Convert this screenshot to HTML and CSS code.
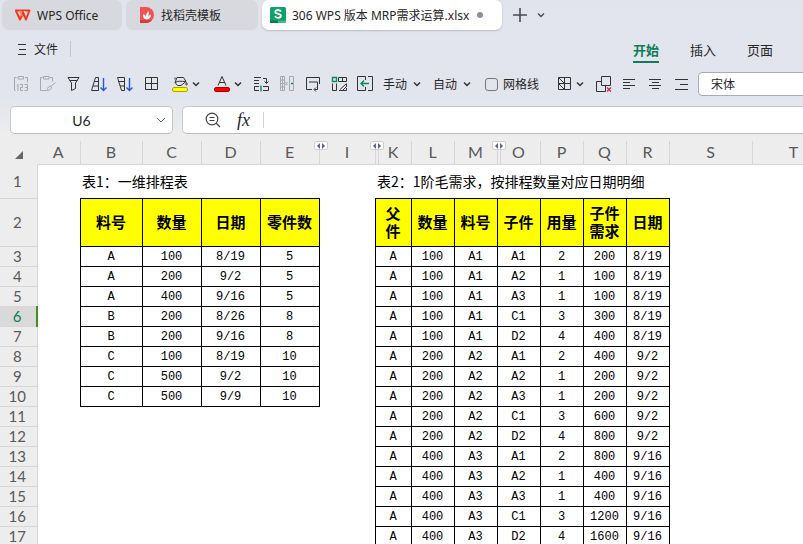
FILE: index.html
```html
<!DOCTYPE html>
<html lang="zh-CN">
<head>
    <meta charset="UTF-8">
    <meta name="viewport" content="width=device-width, initial-scale=1.0">
    <title>306 WPS 版本 MRP需求运算.xlsx</title>
    <link rel="stylesheet" href="styles.css">
</head>
<body>
    <header class="chrome">
        <nav class="doc-tabs">
            <button class="doc-tab tab-home">
                <svg class="tab-icon" width="16" height="16" viewBox="0 0 16 16">
                    <path d="M.8 3.5h13.6l-3.4 9-3-7-3 7z" fill="none" stroke="#f5371f" stroke-width="2" stroke-linejoin="round"/>
                    <path d="M4.500 3.500l3.500 7" stroke="#ff7a4a" stroke-width="1.4"/>
                    <path d="M9.500 3.800l1.600 4" stroke="#e2e2e6" stroke-width="1"/>
                </svg>
                WPS Office
            </button>
            <button class="doc-tab tab-store">
                <svg class="tab-icon" width="16" height="16" viewBox="0 0 16 16">
                    <path d="M1 0h6a8 8 0 0 1 0 16H1z" fill="#f15355"/>
                    <path d="M1 13h12a8 8 0 0 1-6 3H1z" fill="#d83a3e"/>
                    <path d="M7.500 12.500c-3-.5-4-3-3-5.500 1.500.8 2.500 2 2.500 3.500 0-2.500.5-4.500 2.500-6.500.6 2.300.2 4-.8 6 .8-1.300 1.800-2 3.300-2.200 0 2.600-1.500 4.500-4.500 4.700z" fill="#fff"/>
                </svg>
                找稻壳模板
            </button>
            <button class="doc-tab tab-file active">
                <svg class="tab-icon" width="16" height="16" viewBox="0 0 16 16">
                    <rect width="16" height="16" rx="1.500" fill="#12a06b"/>
                    <path d="M0 13.500h16V16H0z" fill="#0a7d50"/>
                    <path d="M8 13.500h8V16H8z" fill="#3fc08c"/>
                    <path d="M10.800 4.600C10.300 3.500 9.300 3 8 3 6.400 3 5.300 3.700 5.300 4.900c0 2.700 5.600 1.200 5.600 3.900 0 1.200-1.200 2-2.900 2-1.500 0-2.600-.6-3-1.800" fill="none" stroke="#fff" stroke-width="1.800"/>
                </svg>
                306 WPS 版本 MRP需求运算.xlsx
                <span class="unsaved"></span>
            </button>
            <button class="new-tab" aria-label="新建">
                <svg width="14" height="14" viewBox="0 0 14 14"><path d="M7 0v14M0 7h14" stroke="#4a4a4c" stroke-width="1.600"/></svg>
            </button>
            <button class="new-tab" aria-label="更多">
                <svg width="8" height="8" viewBox="0 0 8 8"><path d="M1 2.500l3 3 3-3" fill="none" stroke="#4a4a4c" stroke-width="1.400"/></svg>
            </button>
        </nav>

        <div class="menu-bar">
            <button class="file-menu">
                <svg width="9" height="12" viewBox="0 0 9 12"><path d="M0 1.500h8M1 6.500h7M0 11.500h8" stroke="#333" stroke-width="1"/></svg>
                文件
            </button>
            <nav class="ribbon-tabs">
                <button class="ribbon-tab current">开始</button>
                <button class="ribbon-tab">插入</button>
                <button class="ribbon-tab">页面</button>
            </nav>
        </div>

        <div class="toolbar">
            <button class="tool disabled" aria-label="粘贴值">
                <svg viewBox="0 0 18 18">
                    <path d="M4.500 2.500h-2v13h1M13 2.500h2.500v5M6 1.500h5.500v2.500H6z"/>
                    <path d="M5 10.500l1-1v6.500M8 9.500h2.500v3H8.500v3H11M12.500 9.500H15.500v6h-3M13 12.500h2.500"/>
                </svg>
            </button>
            <button class="tool disabled" aria-label="选择性粘贴">
                <svg viewBox="0 0 18 18">
                    <path d="M4.500 2.500h-2v13H8M12 2.500h2.500v4M5.500 1.500H11V4H5.500z"/>
                    <path d="M17.500 7.500l-5 4M12 11c1 .5 1.500 1 1.500 2-1 2-3 2.500-5 2.500 1.200-1 .8-3.500 3.500-4.500z"/>
                </svg>
            </button>
            <button class="tool" aria-label="筛选">
                <svg viewBox="0 0 18 18"><path d="M4 2.500h11L11.500 8v5.500l-4 2V8zM5.500 5.500h8"/></svg>
            </button>
            <button class="tool" aria-label="升序">
                <svg viewBox="0 0 18 18">
                    <path d="M5.500 2.500h3v13h-7zM4.500 6.500h4M3 11h5.500"/>
                    <path class="blue" d="M13.500 3v12.500M10.500 12.500l3 3 3-3"/>
                </svg>
            </button>
            <button class="tool" aria-label="降序">
                <svg viewBox="0 0 18 18">
                    <path d="M1.500 2.500h7v13h-3zM2.500 6.500h6M4 11h4.500"/>
                    <path class="blue" d="M13.500 3v12.500M10.500 12.500l3 3 3-3"/>
                </svg>
            </button>
            <button class="tool" aria-label="边框">
                <svg viewBox="0 0 18 18"><path d="M3.500 2.500h12v12h-12zM9.500 2.500v12M3.500 8.500h12"/></svg>
            </button>
            <button class="tool drop" aria-label="填充颜色">
                <svg viewBox="0 0 18 18">
                    <path d="M6 2.500h6.500l2.500 4-5 4H6.500L4 7.500zM4 7.500c3-2 6-1 11-1M4 4.500V2.500"/>
                    <path d="M15.500 7.500c1 1.500 1 2.500 0 2.500s-1-1 0-2.500z"/>
                    <rect class="fill-yellow" x="1.500" y="12.500" width="15" height="4" rx="1.500"/>
                </svg>
                <svg class="caret" viewBox="0 0 8 8"><path d="M1 2.500l3 3 3-3"/></svg>
            </button>
            <button class="tool drop" aria-label="字体颜色">
                <svg viewBox="0 0 18 18">
                    <path d="M5 10.500l4-9 4 9M6.200 7.500h5.600"/>
                    <rect class="fill-red" x="1.500" y="12.500" width="15" height="4" rx="1.500"/>
                </svg>
                <svg class="caret" viewBox="0 0 8 8"><path d="M1 2.500l3 3 3-3"/></svg>
            </button>
            <button class="tool" aria-label="转置">
                <svg viewBox="0 0 18 18">
                    <path d="M2 2.500h7M2 5.500h5M2 8.500h5M11 3.500h3.500V8M12.500 6.500l2 2 2-2M7 11.500H2.500v4H7M11 11.500h5.500v4H11"/>
                    <path class="green" d="M9 10.500v6"/>
                </svg>
            </button>
            <button class="tool disabled" aria-label="分列">
                <svg viewBox="0 0 18 18">
                    <path d="M2.500 1.500h4v14h-4zM2.500 5h4M2.500 8.500h4M2.500 12h4M4.500 1.500v14M11.500 1.500h4v14h-4zM7.500 7l2 3M9.500 7l-2 3"/>
                    <path class="green" d="M13 8.500h2"/>
                </svg>
            </button>
            <button class="tool" aria-label="自动换行">
                <svg viewBox="0 0 18 18"><path d="M8 14.500H2.500v-12h13V9M5 7h8.500v7.500h-3M12 12.500l-2 2 2 2"/></svg>
            </button>
            <button class="tool" aria-label="数据透视表">
                <svg viewBox="0 0 18 18">
                    <path d="M8.500 2.500h8v4h-8zM12.500 2.500v4M2.500 8.500v7h4v-7M9 15.500h7.500V13M10 14.500l6-5.500M16.500 8.500V12M12.500 15.500l4-4"/>
                    <path class="green" d="M2.500 2.500h4v4h-4z"/>
                </svg>
            </button>
            <button class="tool" aria-label="合并">
                <svg viewBox="0 0 18 18">
                    <path d="M9.500 5V1.500h-8v14h8V12M12 1.500h4.500v14H12"/>
                    <path class="green" d="M5 8.500h8M8 5.500l-3 3 3 3"/>
                </svg>
            </button>
            <button class="tool drop text-drop">手动
                <svg class="caret" viewBox="0 0 8 8"><path d="M1 2.500l3 3 3-3"/></svg>
            </button>
            <button class="tool drop text-drop">自动
                <svg class="caret" viewBox="0 0 8 8"><path d="M1 2.500l3 3 3-3"/></svg>
            </button>
            <label class="gridlines"><input type="checkbox"> 网格线</label>
            <button class="tool drop" aria-label="斜线表头">
                <svg viewBox="0 0 18 18"><path d="M3.500 2.500h12v12h-12zM9.500 2.500v12M3.500 8.500h12M3.500 2.500l6 6M3.500 8.500l6 6"/></svg>
                <svg class="caret" viewBox="0 0 8 8"><path d="M1 2.500l3 3 3-3"/></svg>
            </button>
            <button class="tool" aria-label="删除对象">
                <svg viewBox="0 0 18 18">
                    <path d="M7.500 1.500h9v9h-9zM7.500 6.500h-5v10h9v-6"/>
                    <path class="red" d="M13 12.500l4 4M17 12.500l-4 4"/>
                </svg>
            </button>
            <button class="tool" aria-label="左对齐">
                <svg viewBox="0 0 18 18"><path d="M3 4.500h12M3 7.500h7M3 10.500h12M3 13.500h7"/></svg>
            </button>
            <button class="tool" aria-label="居中">
                <svg viewBox="0 0 18 18"><path d="M3 4.500h12M6 7.500h7M3 10.500h12M6 13.500h7"/></svg>
            </button>
            <button class="tool" aria-label="右对齐">
                <svg viewBox="0 0 18 18"><path d="M3 4.500h13M8 9.500h8M3 14.500h13"/></svg>
            </button>
            <select class="font-select" aria-label="字体">
                <option>宋体</option>
            </select>
        </div>

        <div class="formula-row">
            <div class="name-box">
                <input type="text" value="U6" aria-label="名称框">
                <button class="name-drop" aria-label="展开">
                    <svg width="10" height="8" viewBox="0 0 10 8"><path d="M1 2l4 4 4-4" fill="none" stroke="#666"/></svg>
                </button>
            </div>
            <div class="formula-bar">
                <button class="formula-btn" aria-label="浏览公式结果">
                    <svg width="16" height="16" viewBox="0 0 16 16"><path d="M11 11l4 4M4.500 5.500h5M4.500 8.500h5" stroke="#444" stroke-width="1.200"/><circle cx="7" cy="7" r="5.800" fill="none" stroke="#444" stroke-width="1.200"/></svg>
                </button>
                <button class="formula-btn fx">fx</button>
                <input type="text" class="formula-input" aria-label="编辑栏">
            </div>
        </div>
    </header>

    <main class="sheet">
        <table class="grid">
            <colgroup>
                <col class="w-head"><col class="w-a"><col class="w-b"><col class="w-c"><col class="w-c"><col class="w-c">
                <col class="w-i"><col class="w-k"><col class="w-l"><col class="w-l"><col class="w-l"><col class="w-l">
                <col class="w-l"><col class="w-l"><col class="w-s"><col class="w-s"><col>
            </colgroup>
            <thead>
                <tr>
                    <th class="corner"><svg width="8" height="8" viewBox="0 0 8 8"><path d="M8 0v8H0z" fill="#666"/></svg></th>
                    <th>A</th><th>B</th><th>C</th><th>D</th>
                    <th class="folded">E<span class="fold"></span></th>
                    <th class="folded">I<span class="fold"></span></th>
                    <th>K</th><th>L</th>
                    <th class="folded">M<span class="fold"></span></th>
                    <th>O</th><th>P</th><th>Q</th><th>R</th><th>S</th><th>T</th><th></th>
                </tr>
            </thead>
            <tbody id="rows">
                <tr class="title-row">
                    <th>1</th>
                    <td></td>
                    <td colspan="4">表1：一维排程表</td>
                    <td></td>
                    <td colspan="7">表2：1阶毛需求，按排程数量对应日期明细</td>
                </tr>
                <tr class="head-row">
                    <th>2</th>
                    <td></td>
                    <td class="box">料号</td><td class="box">数量</td><td class="box">日期</td><td class="box">零件数</td>
                    <td></td>
                    <td class="box">父<br>件</td><td class="box">数量</td><td class="box">料号</td><td class="box">子件</td>
                    <td class="box">用量</td><td class="box">子件<br>需求</td><td class="box">日期</td>
                </tr>
            </tbody>
        </table>
    </main>

    <script src="script.js"></script>
</body>
</html>
```
FILE: styles.css
```css
* {
    box-sizing: border-box;
}

body {
    margin: 0;
    height: 100vh;
    display: flex;
    flex-direction: column;
    overflow: hidden;
    font-family: "Noto Sans", "Noto Sans CJK SC", sans-serif;
    font-size: 12px;
    color: #262626;
    background-color: #fff;
}

button,
input,
select {
    font: inherit;
    color: inherit;
    border: none;
    background: none;
    padding: 0;
    margin: 0;
}

input:focus {
    outline: none;
}

.chrome {
    flex: none;
    background: linear-gradient(#e1e4ed 0, #e2e5ed 98px, #ededed 138px);
}

/* document tabs */
.doc-tabs {
    display: flex;
    height: 30px;
    padding-left: 2px;
    gap: 4px;
}

.doc-tab {
    display: flex;
    align-items: center;
    gap: 6px;
    padding: 0 13px;
    border-radius: 7px;
    background-color: #d8d9de;
    white-space: nowrap;
}

.tab-home {
    width: 120px;
}

.tab-store {
    width: 132px;
}

.tab-file {
    width: 240px;
    padding: 0 8px;
}

.doc-tab.active {
    background-color: #fff;
    box-shadow: 0 1px 2px #b9bdc6;
}

.tab-icon {
    flex: none;
}

.unsaved {
    width: 6px;
    height: 6px;
    margin-left: 2px;
    border-radius: 50%;
    background-color: #8f8f8f;
}

.new-tab {
    display: flex;
    align-items: center;
    padding: 0 3px;
}

.new-tab:nth-of-type(4) {
    padding-left: 7px;
}

/* menu */
.menu-bar {
    display: flex;
    justify-content: space-between;
    height: 38px;
    padding: 0 30px 0 18px;
}

.file-menu {
    display: flex;
    align-items: center;
    gap: 7px;
    height: 16px;
    margin-top: 11px;
    padding-right: 12px;
    border-right: 1px solid #c3c5cb;
}

.ribbon-tabs {
    display: flex;
    gap: 31px;
}

.ribbon-tab {
    height: 24px;
    margin-top: 9px;
    padding-bottom: 2px;
    font-size: 13px;
    border-bottom: 2px solid transparent;
}

.ribbon-tab.current {
    color: #0b7d57;
    font-weight: bold;
    border-color: #0b7d57;
}

/* toolbar */
.toolbar {
    display: flex;
    align-items: center;
    gap: 8px;
    height: 32px;
    padding-left: 12px;
    white-space: nowrap;
}

.tool {
    flex: none;
    display: flex;
    align-items: center;
    gap: 3px;
}

.tool svg {
    width: 18px;
    height: 18px;
    fill: none;
    stroke: #333;
}

.tool.disabled svg {
    stroke: #a7a8ad;
}

.tool .caret {
    width: 8px;
    height: 8px;
    stroke-width: 1.5;
}

.drop {
    padding: 0 2px 0 3px;
}

.text-drop {
    gap: 6px;
    padding: 0 3px 0 1px;
}

.tool .blue {
    stroke: #2457e6;
    stroke-width: 1.4;
}

.tool .green {
    stroke: #0b8a5c;
    stroke-width: 1.4;
}

.tool .red {
    stroke: #c8284e;
    stroke-width: 1.3;
}

.fill-yellow {
    fill: #ff0;
    stroke: #a8a800;
}

.fill-red {
    fill: #f00;
    stroke: #b50000;
}

.gridlines {
    flex: none;
    display: flex;
    align-items: center;
    gap: 5px;
    padding: 0 5px 0 3px;
}

.gridlines input {
    appearance: none;
    width: 13px;
    height: 13px;
    border: 1px solid #777;
    border-radius: 3px;
}

.font-select {
    appearance: none;
    flex: 1 0 120px;
    height: 24px;
    padding-left: 12px;
    border: 1px solid #a9abb3;
    border-radius: 4px;
    background-color: #fff;
}

/* name box and formula bar */
.formula-row {
    display: flex;
    gap: 9px;
    height: 41px;
    padding: 6px 0 7px 10px;
}

.name-box,
.formula-bar {
    display: flex;
    align-items: center;
    background-color: #fff;
    border: 1px solid #c6c9cf;
    border-bottom-color: #b9bbbe;
    border-radius: 5px;
}

.name-box {
    flex: none;
    width: 163px;
    padding-right: 6px;
}

.name-box input {
    flex: 1;
    min-width: 0;
    padding-right: 4px;
    text-align: center;
    font-family: Lato, sans-serif;
    font-size: 14px;
}

.name-drop {
    display: flex;
}

.formula-bar {
    flex: 1;
    gap: 16px;
    padding-left: 22px;
    border-right: none;
    border-radius: 5px 0 0 5px;
}

.formula-btn {
    display: flex;
}

.fx {
    font-family: "Liberation Serif", serif;
    font-style: italic;
    font-size: 18px;
    line-height: 20px;
}

.formula-input {
    flex: 1;
    height: 16px;
    margin-left: -3px;
    border-left: 1px solid #d2d2d2;
}

/* sheet */
.sheet {
    flex: 1;
    overflow: hidden;
}

.grid {
    width: 100%;
    table-layout: fixed;
    border-collapse: collapse;
}

.w-head {
    width: 37px;
}

.w-a {
    width: 43px;
}

.w-b {
    width: 62px;
}

.w-c {
    width: 59px;
}

.w-i {
    width: 56px;
}

.w-k {
    width: 36px;
}

.w-l {
    width: 43px;
}

.w-s {
    width: 83px;
}

.grid th,
.grid td {
    height: 20px;
    padding: 0;
    text-align: center;
    line-height: 16px;
}

.grid th {
    font-family: Lato, sans-serif;
    font-size: 15px;
    font-weight: normal;
    color: #595959;
    background-color: #ededed;
    border: 1px solid #d6d6d6;
}

.grid thead th {
    height: 23px;
    font-size: 16px;
    border-top: none;
}

.grid thead .corner,
.grid thead .corner + th {
    border-left: none;
}

.grid thead .corner {
    border: none;
}

.grid tbody th {
    border-left: none;
    padding-right: 2px;
}

.grid .title-row th {
    border-top: none;
}

.grid tbody .selected th {
    color: #0b7d57;
    background-color: #d9d9d9;
    border-right: 2px solid #3f9126;
}

/* marker shown where columns are hidden */
.folded {
    position: relative;
}

.folded::after {
    content: "";
    position: absolute;
    top: 0;
    right: -4px;
    width: 1px;
    height: 23px;
    background-color: #d6d6d6;
}

.fold {
    position: absolute;
    z-index: 1;
    top: 0;
    right: -9px;
    width: 14px;
    height: 9px;
    display: flex;
    align-items: center;
    justify-content: center;
    gap: 2px;
    border: 1px solid #d0d0d0;
    border-radius: 2px;
    background-color: #fff;
}

.fold::before,
.fold::after {
    content: "";
    border: 3px solid transparent;
}

.fold::before {
    border-left: none;
    border-right-color: #5b6478;
}

.fold::after {
    border-right: none;
    border-left-color: #5b6478;
}

.grid td {
    padding-top: 2px;
    color: #000;
    font-family: "Liberation Mono", monospace;
    font-size: 12px;
}

.grid .box {
    border: 1px solid #000;
}

.grid .title-row td {
    height: 34px;
    padding: 0 0 0 2px;
    text-align: left;
    white-space: nowrap;
    font-family: "Noto Sans CJK SC", sans-serif;
    font-size: 14px;
}

.grid .head-row td {
    height: 48px;
    padding-top: 0;
    font-family: "Noto Sans CJK SC", sans-serif;
    font-size: 15px;
    font-weight: bold;
    line-height: 18px;
}

.head-row .box {
    background-color: #ff0;
}
```
FILE: script.js
```js
const rows = document.getElementById('rows');

const plan = [
    ['A', '100', '8/19', '5'],
    ['A', '200', '9/2', '5'],
    ['A', '400', '9/16', '5'],
    ['B', '200', '8/26', '8'],
    ['B', '200', '9/16', '8'],
    ['C', '100', '8/19', '10'],
    ['C', '500', '9/2', '10'],
    ['C', '500', '9/9', '10']
];

const demand = [
    ['A', '100', 'A1', 'A1', '2', '200', '8/19'],
    ['A', '100', 'A1', 'A2', '1', '100', '8/19'],
    ['A', '100', 'A1', 'A3', '1', '100', '8/19'],
    ['A', '100', 'A1', 'C1', '3', '300', '8/19'],
    ['A', '100', 'A1', 'D2', '4', '400', '8/19'],
    ['A', '200', 'A2', 'A1', '2', '400', '9/2'],
    ['A', '200', 'A2', 'A2', '1', '200', '9/2'],
    ['A', '200', 'A2', 'A3', '1', '200', '9/2'],
    ['A', '200', 'A2', 'C1', '3', '600', '9/2'],
    ['A', '200', 'A2', 'D2', '4', '800', '9/2'],
    ['A', '400', 'A3', 'A1', '2', '800', '9/16'],
    ['A', '400', 'A3', 'A2', '1', '400', '9/16'],
    ['A', '400', 'A3', 'A3', '1', '400', '9/16'],
    ['A', '400', 'A3', 'C1', '3', '1200', '9/16'],
    ['A', '400', 'A3', 'D2', '4', '1600', '9/16']
];

const selectedRow = 6;

function boxes(values) {
    return values.map(value => `<td class="box">${value}</td>`).join('');
}

demand.forEach((item, i) => {
    const tr = document.createElement('tr');
    const number = i + 3;
    const left = plan[i] ? boxes(plan[i]) : '<td></td>'.repeat(4);

    if (number === selectedRow) {
        tr.className = 'selected';
    }
    tr.innerHTML = `<th>${number}</th><td></td>${left}<td></td>${boxes(item)}`;
    rows.appendChild(tr);
});
```
